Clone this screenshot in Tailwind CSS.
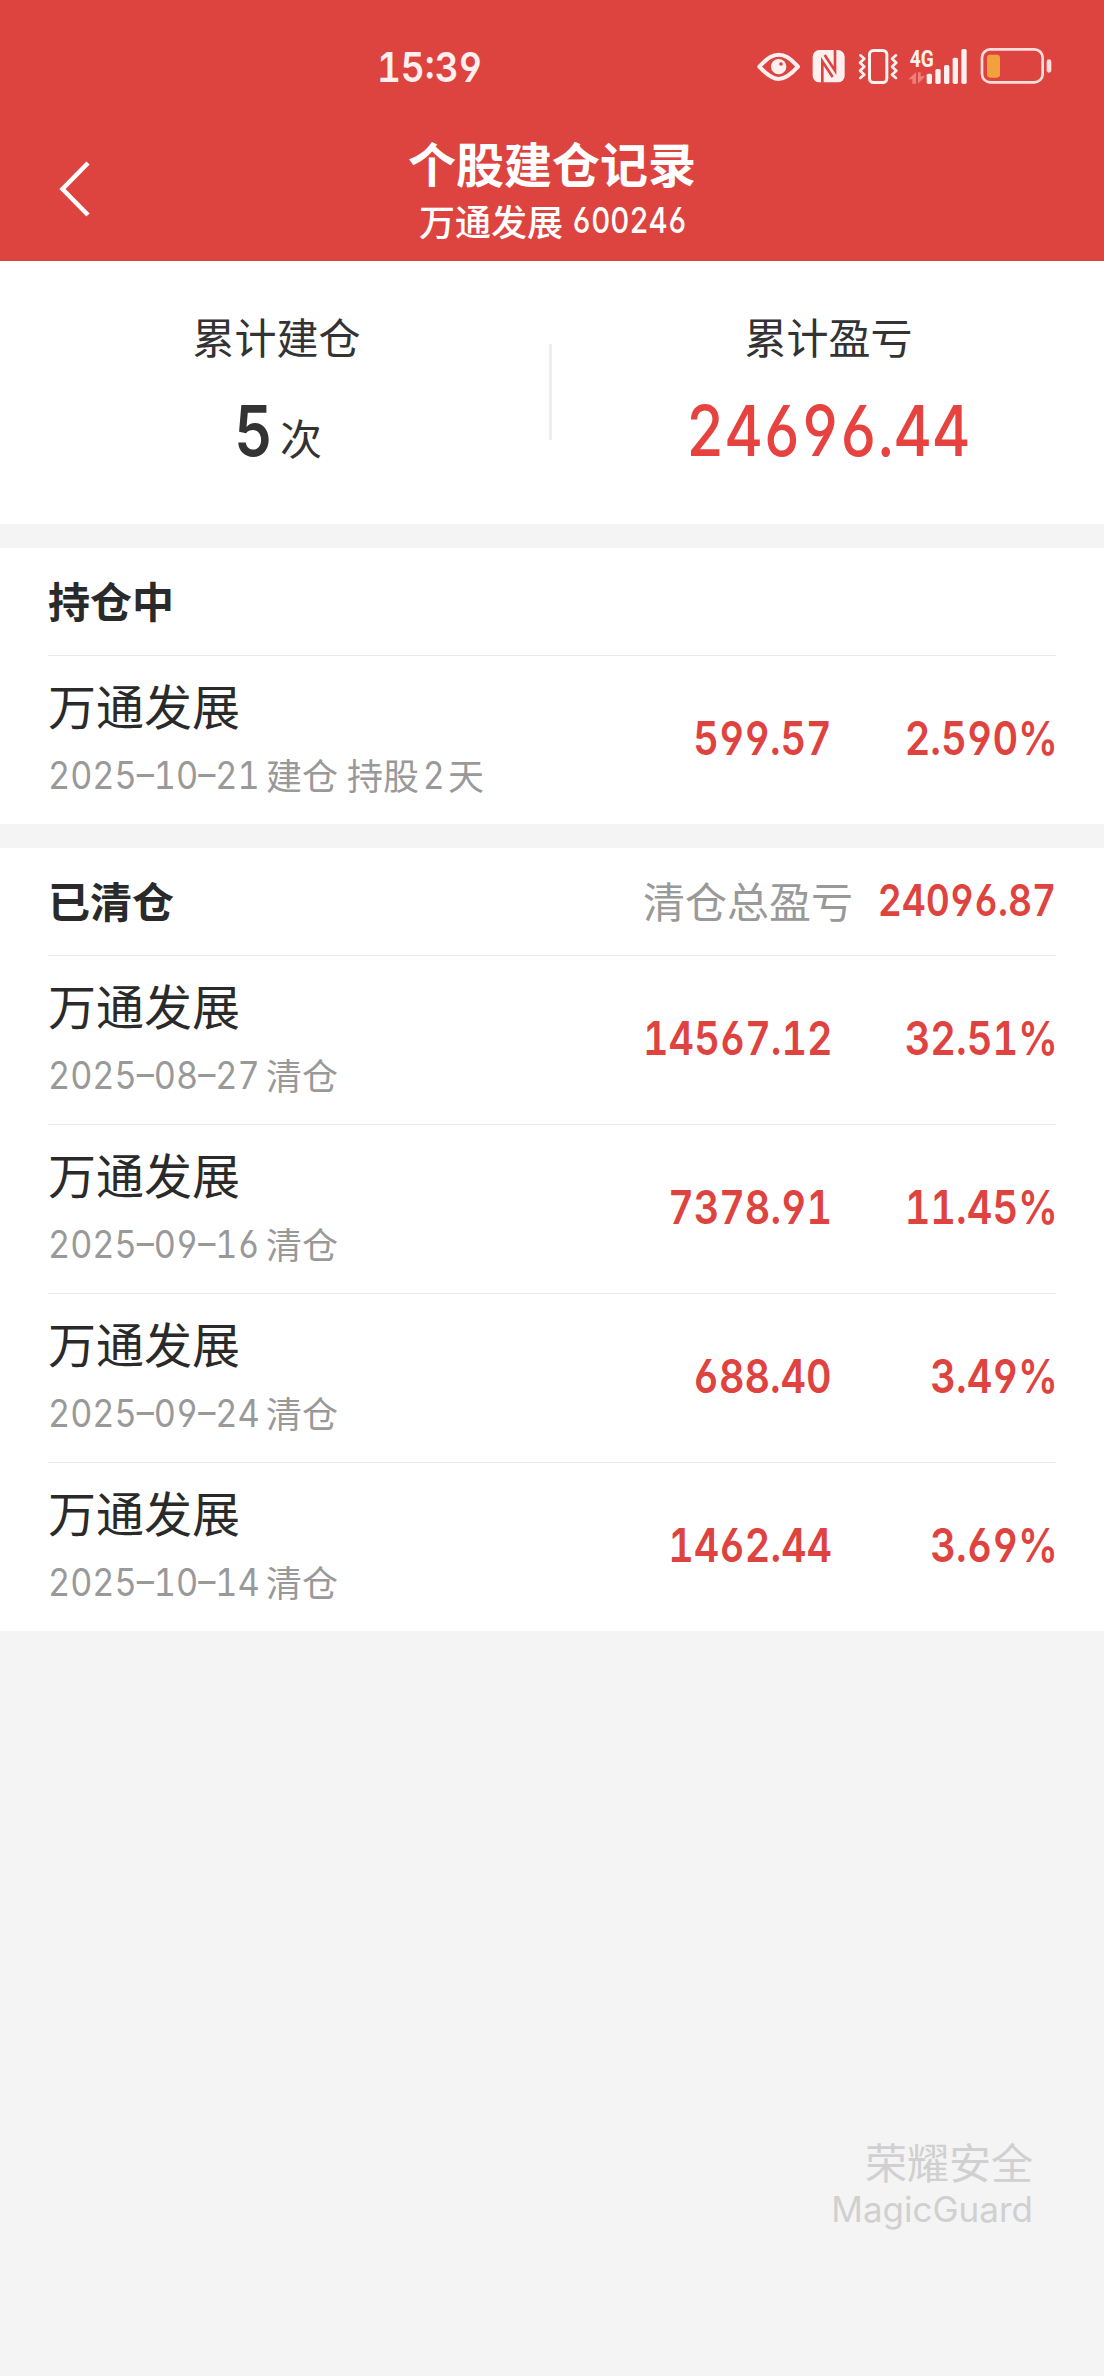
<!DOCTYPE html>
<html lang="zh-CN">
<head>
    <meta charset="UTF-8">
    <meta name="viewport" content="width=device-width, initial-scale=1.0">
    <title>个股建仓记录</title>
    <script src="https://cdn.jsdelivr.net/npm/@tailwindcss/browser@4"></script>
</head>
<body class="bg-[#f4f4f4] font-['Noto_Sans_CJK_SC',sans-serif] text-[#2a2a2a] w-[1104px] h-[2376px] overflow-hidden relative">
    <header class="bg-[#dd443f] h-[261px] text-white relative">
        <!-- Status bar -->
        <div class="h-[131px] flex items-center justify-between pl-[377px] pr-[51px] pt-[3px]">
            <span class="font-[Inter,sans-serif] font-semibold text-[41px] leading-[60px] text-[#fff0ef] [font-feature-settings:'tnum','cv03','cv04'] inline-block origin-left scale-x-[0.9]">15:39</span>
            <svg class="w-[296px] h-[40px]" viewBox="51 51 888 120" fill="none">
                <!-- Eye -->
                <path d="M58 110C85 80 100 74 116 74s31 6 58 36C147 140 132 147 116 147S85 140 58 110z" stroke="#fff0ef" stroke-width="12" stroke-linejoin="round"/>
                <circle cx="116" cy="110" r="23" fill="#fff0ef"/>
                <circle cx="123" cy="102" r="5.500" fill="#dd443f"/>
                <!-- NFC -->
                <rect x="218" y="60" width="96" height="97" rx="20" fill="#fff0ef"/>
                <path d="M247 158V94l31 47M285 58v64l-31-47" stroke="#dd443f" stroke-width="8"/>
                <!-- Vibrate -->
                <rect x="388.500" y="61.500" width="52" height="96" rx="12" stroke="#fff0ef" stroke-width="9"/>
                <path d="M361 76l12 10-13 12 13 12-13 12 13 12-12 10M468 76l-12 10 13 12-13 12 13 12-13 12 12 10" stroke="#fff0ef" stroke-width="8" stroke-linecap="round" stroke-linejoin="round"/>
                <!-- Signal -->
                <text x="509" y="110" textLength="72" lengthAdjust="spacingAndGlyphs" fill="#fff0ef" font-family="Roboto, sans-serif" font-weight="700" font-size="69">4G</text>
                <path d="M528 127v34h-11v-13h-12zM534 161v-34h8v12h14z" fill="#ee7f7b"/>
                <g fill="#fff0ef">
                    <rect x="560" y="131" width="16" height="31" rx="5"/>
                    <rect x="586" y="117" width="16" height="45" rx="5"/>
                    <rect x="612" y="105" width="16" height="57" rx="5"/>
                    <rect x="638" y="83" width="16" height="79" rx="5"/>
                    <rect x="664" y="57" width="16" height="105" rx="5"/>
                </g>
                <!-- Battery -->
                <rect x="726" y="58" width="182" height="99" rx="25" stroke="#fddedd" stroke-width="8"/>
                <rect x="741" y="74" width="39" height="69" rx="10" fill="#f2a23d"/>
                <rect x="920" y="88" width="14" height="40" rx="7" fill="#fddedd"/>
            </svg>
        </div>
        <!-- Title bar -->
        <div class="h-[130px] flex flex-col items-center pt-px">
            <h1 class="text-[48px] leading-[60px] font-bold">个股建仓记录</h1>
            <p class="flex items-center text-[36px] leading-[54px] font-medium">
                <span>万通发展</span>
                <span class="font-[Inter,sans-serif] font-medium [font-feature-settings:'tnum','cv03','cv04'] w-[113px] ml-[9px] whitespace-nowrap mt-px"><span class="inline-block origin-left scale-x-[0.82]">600246</span></span>
            </p>
        </div>
        <svg class="absolute left-[56px] top-[158px] w-[36px] h-[62px]" viewBox="0 0 36 62" fill="none">
            <path d="M32 5L6.500 31 32 57" stroke="#fff" stroke-width="4.500"/>
        </svg>
    </header>

    <!-- Summary -->
    <section class="bg-white h-[263px] flex text-[#333]">
        <div class="flex-1 flex flex-col items-center pt-[45px] pl-px">
            <div class="text-[42px] leading-[60px]">累计建仓</div>
            <div class="flex items-baseline mt-[29px]">
                <span class="font-[Inter,sans-serif] font-semibold text-[70px] leading-[72px] inline-block scale-x-[0.85]">5</span>
                <span class="text-[42px] leading-[60px] ml-[5px] -translate-y-px">次</span>
            </div>
        </div>
        <div class="w-[3px] -ml-[3px] h-[96px] mt-[83px] bg-[#eee]"></div>
        <div class="flex-1 flex flex-col items-center pt-[45px] pl-px">
            <div class="text-[42px] leading-[60px]">累计盈亏</div>
            <div class="mt-[29px] font-[Inter,sans-serif] font-medium text-[70px] leading-[72px] text-[#e64340] [font-feature-settings:'tnum','cv03','cv04'] scale-x-[0.845]">24696.44</div>
        </div>
    </section>

    <!-- Holding -->
    <section class="bg-white mt-[24px] px-[48px]">
        <h2 class="h-[108px] border-b border-[#ebebeb] pt-[22px] text-[42px] leading-[60px] font-bold">持仓中</h2>
        <div class="h-[168px] flex">
            <div class="flex-1 pt-[18px]">
                <div class="text-[48px] leading-[60px]">万通发展</div>
                <div class="flex mt-[15px] text-[36px] leading-[50px] text-[#999]">
                    <span class="w-[218px] whitespace-nowrap font-[Inter,sans-serif] text-[38px] pt-px [font-feature-settings:'tnum','cv03','cv04']"><span class="inline-block origin-left scale-x-[0.9]">2025–10–21</span></span>
                    <span>建仓</span>
                    <span class="ml-[9px]">持股</span>
                    <span class="w-[29px] flex justify-center font-[Inter,sans-serif] text-[38px] pt-px"><span class="inline-block scale-x-[0.88]">2</span></span>
                    <span>天</span>
                </div>
            </div>
            <div class="flex pb-[4px] -mr-[2px] items-center font-[Inter,sans-serif] font-semibold text-[47px] text-[#de4340] [font-feature-settings:'tnum','cv03','cv04']">
                <span class="origin-right scale-x-[0.84]">599.57</span>
                <span class="w-[226px] text-right origin-right scale-x-[0.845]">2.590%</span>
            </div>
        </div>
    </section>

    <!-- Closed -->
    <section class="bg-white mt-[24px] px-[48px]">
        <div class="h-[108px] border-b border-[#ebebeb] pt-[22px] flex text-[42px] leading-[60px]">
            <h2 class="flex-1 font-bold">已清仓</h2>
            <span class="text-[#999]">清仓总盈亏</span>
            <div class="w-[203px] flex justify-end font-[Inter,sans-serif] font-semibold text-[44px] text-[#de4340] [font-feature-settings:'tnum','cv03','cv04']">
                <span class="origin-right scale-x-[0.845]">24096.87</span>
            </div>
        </div>
        <div class="h-[169px] flex border-b border-[#ebebeb]">
            <div class="flex-1 pt-[18px]">
                <div class="text-[48px] leading-[60px]">万通发展</div>
                <div class="flex mt-[15px] text-[36px] leading-[50px] text-[#999]">
                    <span class="w-[218px] whitespace-nowrap font-[Inter,sans-serif] text-[38px] pt-px [font-feature-settings:'tnum','cv03','cv04']"><span class="inline-block origin-left scale-x-[0.9]">2025–08–27</span></span>
                    <span>清仓</span>
                </div>
            </div>
            <div class="flex pb-[4px] -mr-[2px] items-center font-[Inter,sans-serif] font-semibold text-[47px] text-[#de4340] [font-feature-settings:'tnum','cv03','cv04']">
                <span class="origin-right scale-x-[0.84]">14567.12</span>
                <span class="w-[226px] text-right origin-right scale-x-[0.845]">32.51%</span>
            </div>
        </div>
        <div class="h-[169px] flex border-b border-[#ebebeb]">
            <div class="flex-1 pt-[18px]">
                <div class="text-[48px] leading-[60px]">万通发展</div>
                <div class="flex mt-[15px] text-[36px] leading-[50px] text-[#999]">
                    <span class="w-[218px] whitespace-nowrap font-[Inter,sans-serif] text-[38px] pt-px [font-feature-settings:'tnum','cv03','cv04']"><span class="inline-block origin-left scale-x-[0.9]">2025–09–16</span></span>
                    <span>清仓</span>
                </div>
            </div>
            <div class="flex pb-[4px] -mr-[2px] items-center font-[Inter,sans-serif] font-semibold text-[47px] text-[#de4340] [font-feature-settings:'tnum','cv03','cv04']">
                <span class="origin-right scale-x-[0.84]">7378.91</span>
                <span class="w-[226px] text-right origin-right scale-x-[0.845]">11.45%</span>
            </div>
        </div>
        <div class="h-[169px] flex border-b border-[#ebebeb]">
            <div class="flex-1 pt-[18px]">
                <div class="text-[48px] leading-[60px]">万通发展</div>
                <div class="flex mt-[15px] text-[36px] leading-[50px] text-[#999]">
                    <span class="w-[218px] whitespace-nowrap font-[Inter,sans-serif] text-[38px] pt-px [font-feature-settings:'tnum','cv03','cv04']"><span class="inline-block origin-left scale-x-[0.9]">2025–09–24</span></span>
                    <span>清仓</span>
                </div>
            </div>
            <div class="flex pb-[4px] -mr-[2px] items-center font-[Inter,sans-serif] font-semibold text-[47px] text-[#de4340] [font-feature-settings:'tnum','cv03','cv04']">
                <span class="origin-right scale-x-[0.84]">688.40</span>
                <span class="w-[226px] text-right origin-right scale-x-[0.845]">3.49%</span>
            </div>
        </div>
        <div class="h-[168px] flex">
            <div class="flex-1 pt-[18px]">
                <div class="text-[48px] leading-[60px]">万通发展</div>
                <div class="flex mt-[15px] text-[36px] leading-[50px] text-[#999]">
                    <span class="w-[218px] whitespace-nowrap font-[Inter,sans-serif] text-[38px] pt-px [font-feature-settings:'tnum','cv03','cv04']"><span class="inline-block origin-left scale-x-[0.9]">2025–10–14</span></span>
                    <span>清仓</span>
                </div>
            </div>
            <div class="flex pb-[4px] -mr-[2px] items-center font-[Inter,sans-serif] font-semibold text-[47px] text-[#de4340] [font-feature-settings:'tnum','cv03','cv04']">
                <span class="origin-right scale-x-[0.84]">1462.44</span>
                <span class="w-[226px] text-right origin-right scale-x-[0.845]">3.69%</span>
            </div>
        </div>
    </section>

    <!-- Watermark -->
    <div class="absolute right-[71px] bottom-[143px] text-right text-[#d0d0d0]">
        <div class="text-[42px] leading-[49px]">荣耀安全</div>
        <div class="font-[Inter,sans-serif] text-[35px] leading-[48px]">MagicGuard</div>
    </div>
</body>
</html>
